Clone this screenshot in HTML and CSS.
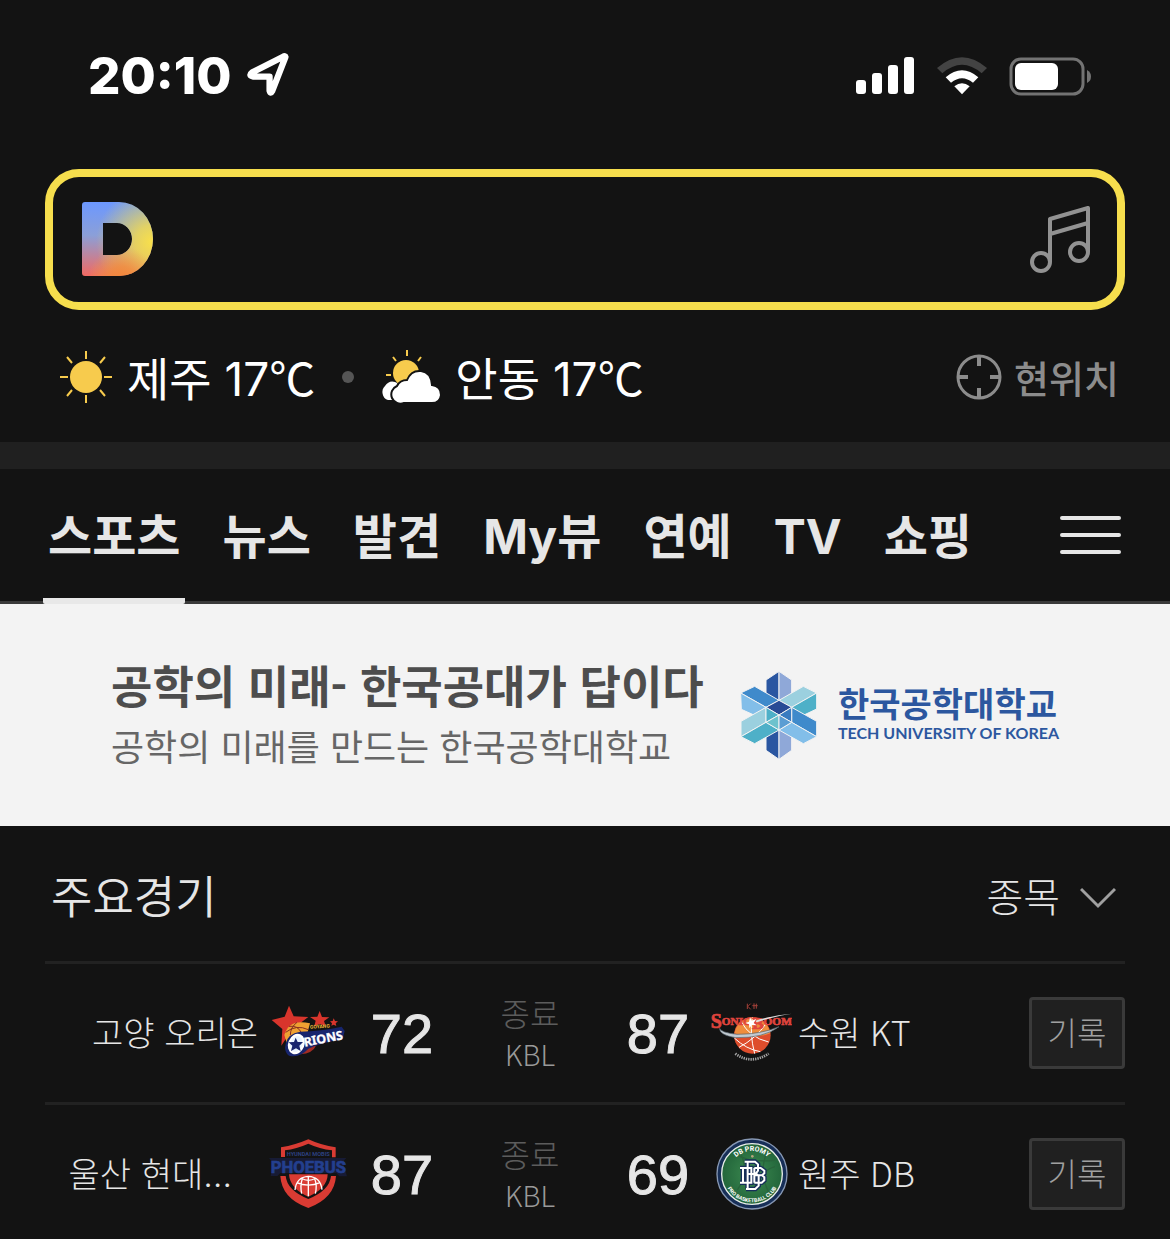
FILE: index.html
```html
<!DOCTYPE html>
<html lang="ko">
<head>
  <meta charset="UTF-8">
  <meta name="viewport" content="width=device-width, initial-scale=1.0">
  <title>Daum</title>
  <link rel="stylesheet" href="styles.css">
</head>
<body>
  <!-- Status bar -->
  <div class="status-bar">
    <div class="clock">
      <span>20:10</span>
      <svg class="location-icon" width="46" height="46" viewBox="0 0 44 44">
        <path d="M38.500 4.500 26 36.500Q24.500 39.500 23.500 36V22.500H7.500Q3 21.500 7 18.500L35.500 4Q39.500 2 38.500 4.500Z" fill="none" stroke="#fff" stroke-width="6" stroke-linejoin="round"/>
      </svg>
    </div>
    <div class="signals">
      <svg width="60" height="38" viewBox="0 0 60 38" fill="#fff">
        <rect x="1" y="23" width="10" height="14" rx="3"/>
        <rect x="17" y="16" width="10" height="21" rx="3"/>
        <rect x="33" y="8" width="10" height="29" rx="3"/>
        <rect x="49" y="0" width="10" height="37" rx="3"/>
      </svg>
      <svg width="50" height="38" viewBox="0 0 150 114">
        <path d="M0 33Q75 -32 150 33L134 49Q75 -2 16 49Z" fill="#434343"/>
        <path d="M26 61Q75 19 124 61L108 77Q75 50 42 77Z" fill="#fff"/>
        <path d="M52 88Q75 70 98 88L75 112Z" fill="#fff"/>
      </svg>
      <svg width="82" height="39" viewBox="0 0 82 39">
        <rect x="2" y="2" width="72" height="35" rx="10" fill="none" stroke="#737373" stroke-width="3"/>
        <rect x="6" y="6" width="43" height="27" rx="6" fill="#fff"/>
        <path d="M78 13Q82 15 82 19.500T78 26Z" fill="#737373"/>
      </svg>
    </div>
  </div>

  <!-- Search box -->
  <form class="search">
    <svg class="logo" width="72" height="74" viewBox="0 0 72 74" role="img" aria-label="Daum">
      <defs>
        <linearGradient id="d-base" x1="0" y1="0" x2="0" y2="1">
          <stop offset="0" stop-color="#6c98ff"/>
          <stop offset=".45" stop-color="#8b9fd8"/>
          <stop offset="1" stop-color="#f16a62"/>
        </linearGradient>
        <radialGradient id="d-yellow" gradientUnits="userSpaceOnUse" cx="70" cy="40" r="56">
          <stop offset="0" stop-color="#f9e04a"/>
          <stop offset=".3" stop-color="#f2db50" stop-opacity=".85"/>
          <stop offset="1" stop-color="#e8d85c" stop-opacity="0"/>
        </radialGradient>
        <radialGradient id="d-orange" gradientUnits="userSpaceOnUse" cx="40" cy="78" r="34">
          <stop offset="0" stop-color="#f1853a"/>
          <stop offset=".4" stop-color="#f28c3b" stop-opacity=".75"/>
          <stop offset="1" stop-color="#f3a040" stop-opacity="0"/>
        </radialGradient>
        <path id="d-shape" fill-rule="evenodd" d="M3 0H37A34 37 0 0 1 37 74H3Q0 74 0 71V3Q0 0 3 0ZM21 21V53H35A15 16 0 0 0 35 21Z"/>
      </defs>
      <use href="#d-shape" fill="url(#d-base)"/>
      <use href="#d-shape" fill="url(#d-yellow)"/>
      <use href="#d-shape" fill="url(#d-orange)"/>
    </svg>
    <input class="search-input" type="search" aria-label="검색어 입력">
    <button class="icon-button" type="button" aria-label="음악 검색">
      <svg width="60" height="68" viewBox="0 0 60 68" fill="none" stroke="#929292" stroke-width="4" stroke-linejoin="round">
        <circle cx="11" cy="57" r="9"/>
        <circle cx="49" cy="47" r="9"/>
        <path d="M20 57V14L58 3V47M20 29 58 18"/>
      </svg>
    </button>
  </form>

  <!-- Weather -->
  <div class="weather">
    <a class="weather-item" href="#">
      <svg width="54" height="54" viewBox="0 0 54 54" fill="#f7cb4d">
        <circle cx="27" cy="27" r="16"/>
        <path d="M27 1V9M27 45V53M1 27H9M45 27H53M8 7 13 13M46 7 41 13M8 46 13 40M46 46 41 40" stroke="#f7cb4d" stroke-width="2"/>
      </svg>
      <span class="label">제주 17<span class="unit">℃</span></span>
    </a>
    <span class="dot"></span>
    <a class="weather-item" href="#">
      <svg width="60" height="54" viewBox="0 0 60 54">
        <path d="M26 0V6M12 7 15 11M40 7 37 11M5 25H10M42 25H47" stroke="#f7cb4d" stroke-width="2"/>
        <circle cx="25" cy="23" r="13" fill="#f7cb4d"/>
        <path d="M7 50A7 8 0 0 1 4 36Q8 30 14 32Q21 34 22 50Z" fill="#fff"/>
        <path d="M23 53A9 9 0 0 1 16 36Q19 30 26 30Q30 20 40 21Q50 22 51 35Q60 36 60 45Q59 53 51 53Z" fill="#fff" stroke="#131313" stroke-width="2"/>
      </svg>
      <span class="label">안동 17<span class="unit">℃</span></span>
    </a>
    <button class="here" type="button">
      <svg width="46" height="46" viewBox="0 0 46 46" fill="none" stroke="#8c8c8c" stroke-width="3">
        <circle cx="23" cy="23" r="21"/>
        <path d="M23 2V12M23 34V44M2 23H12M34 23H44" stroke-width="4"/>
      </svg>
      <span class="label">현위치</span>
    </button>
  </div>

  <!-- Tabs -->
  <nav class="tabs">
    <a class="tab active" href="#">스포츠</a>
    <a class="tab" href="#">뉴스</a>
    <a class="tab" href="#">발견</a>
    <a class="tab" href="#">My뷰</a>
    <a class="tab" href="#">연예</a>
    <a class="tab" href="#">TV</a>
    <a class="tab" href="#">쇼핑</a>
    <button class="icon-button menu" type="button" aria-label="전체 메뉴">
      <svg width="62" height="42" viewBox="0 0 62 42" stroke="#e6e6e6" stroke-width="4" stroke-linecap="round">
        <path d="M2 4H59M2 21H59M2 38H59"/>
      </svg>
    </button>
  </nav>

  <!-- Banner -->
  <a class="banner" href="#">
    <span class="banner-copy">
      <strong class="banner-title">공학의 미래- 한국공대가 답이다</strong>
      <span class="banner-text">공학의 미래를 만드는 한국공학대학교</span>
    </span>
    <svg class="banner-mark" width="78" height="88" viewBox="64 60 232 264" stroke="#f3f3f3" stroke-width="3" stroke-linejoin="round">
      <path d="M180 61 141 87V167L180 148Z" fill="#2a56a1"/>
      <path d="M180 61 218 87V167L180 148Z" fill="#8fa8d8"/>
      <path d="M180 325 141 298V217L180 237Z" fill="#2a56a1"/>
      <path d="M180 325 218 298V217L180 237Z" fill="#8fa8d8"/>
      <path d="M65 126 107 106 180 148 141 169Z" fill="#3f8acb"/>
      <path d="M65 126 141 169 107 193 67 175Z" fill="#82bee9"/>
      <path d="M293 126 253 106 180 148 218 169Z" fill="#9bd0df"/>
      <path d="M293 126 218 169 253 193 293 174Z" fill="#4eb0c8"/>
      <path d="M141 169V214L66 257V211Z" fill="#9bd0df"/>
      <path d="M141 214 180 237 107 278 66 257Z" fill="#4eb0c8"/>
      <path d="M218 169V214L293 257V211Z" fill="#3f8acb"/>
      <path d="M218 214 180 237 253 278 293 257Z" fill="#82bee9"/>
      <path d="M180 148 218 169 180 192 141 169Z" fill="#294b95"/>
      <path d="M141 169 180 192 141 214Z" fill="#4eb0c8"/>
      <path d="M180 192V237L141 214Z" fill="#6dc2cd"/>
      <path d="M218 169V214L180 192Z" fill="#397bc0"/>
      <path d="M180 192 218 214 180 237Z" fill="#5b9dd3"/>
    </svg>
    <span class="banner-brand">
      <strong class="brand-ko">한국공학대학교</strong>
      <span class="brand-en">TECH UNIVERSITY OF KOREA</span>
    </span>
  </a>

  <!-- Games -->
  <section class="games">
    <div class="games-header">
      <h2>주요경기</h2>
      <button class="sport-button" type="button">
        <span>종목</span>
        <svg class="chevron" width="36" height="22" viewBox="0 0 36 22" fill="none" stroke="#a0a0a0" stroke-width="3">
          <path d="M1 2 18 19 35 2"/>
        </svg>
      </button>
    </div>

    <div class="game">
      <span class="team home">고양 오리온</span>
      <svg class="emblem" width="78" height="58" viewBox="28 45 234 174">
        <path d="M88 50 102 82 146 84 113 109 120 138 91 130 65 170 68 120 36 93 75 83Z" fill="#d8352c"/>
        <path d="M180 66 187 84 209 85 193 96 198 111 181 105 164 111 168 95 151 84 173 83Z" fill="#d8352c"/>
        <path d="M222 88 226 96 235 97 228 103 230 111 222 107 215 110 217 103 211 97 219 96Z" fill="#d8352c"/>
        <path d="M74 138Q88 88 151 103L141 140 81 162Z" fill="#eea132"/>
        <path d="M78 130Q110 105 146 122M88 112Q115 108 126 133M112 100Q92 115 92 138" fill="none" stroke="#872f22" stroke-width="3"/>
        <path d="M122 196Q160 192 169 170L138 174Z" fill="#a22c24"/>
        <path d="M78 164Q84 134 121 128 185 127 246 113L255 126 249 151Q190 160 146 179 120 208 88 200 72 188 78 164Z" fill="#17256e"/>
        <ellipse cx="110" cy="165" rx="21" ry="28" fill="#e8f4ff" stroke="#fff" stroke-width="7" transform="rotate(22 110 165)"/>
        <path d="M108 146 114 159 130 159 119 170 123 186 109 178 94 186 98 170 87 160 103 159Z" fill="#17256e"/>
        <text class="orions-text" x="135" y="173" transform="rotate(-11 135 173)">RIONS</text>
        <text class="orions-small" x="151" y="119" transform="rotate(-3 151 119)">GOYANG</text>
      </svg>
      <strong class="score">72</strong>
      <span class="state"><span class="finished">종료</span><span>KBL</span></span>
      <strong class="score">87</strong>
      <svg class="emblem" width="84" height="62" viewBox="25 38 252 186">
        <circle cx="158" cy="138" r="55" fill="#de4d2c"/>
        <path d="M104 132Q115 88 158 86 203 90 212 132 157 153 104 132Z" fill="#ef8d3c"/>
        <path d="M158 84Q149 132 165 193M124 96Q150 145 207 158M200 102Q168 148 118 174M104 146Q140 180 182 187" fill="none" stroke="#fff" stroke-width="3"/>
        <path d="M60 117Q58 137 108 145 192 147 238 112 184 135 112 135 64 130 60 117Z" fill="#c2cad1" stroke="#536069" stroke-width="2"/>
        <text class="sonic-text" x="33" y="116">S<tspan class="sonic-mid" dy="-9">ONIC</tspan></text>
        <text class="sonic-text sonic-boom" x="157" y="118">B<tspan class="sonic-mid" dy="-10">OOM</tspan></text>
        <path d="M151 83 156 94 170 89 162 101 171 108 157 107 149 116 148 105 137 101 148 97Z" fill="#fff"/>
        <path d="M168 94Q223 77 280 73 225 81 170 99Z" fill="#ddd"/>
        <path d="M143 43V59M153 43 145 51 153 60M163 42V59M158 49H174M170 43V58" stroke="#a34139" stroke-width="3"/>
        <path d="M107 193Q154 227 207 193" fill="none" stroke="#a5a5a5" stroke-width="8" stroke-dasharray="4 3"/>
      </svg>
      <span class="team">수원 KT</span>
      <button class="record" type="button">기록</button>
    </div>

    <div class="game">
      <span class="team home clipped">울산 현대…</span>
      <svg class="emblem" width="80" height="70" viewBox="25 27 240 210">
        <path d="M64 81V52Q107 45 146 28 185 46 228 52V82H217V61Q180 57 146 41 110 57 76 61V81Z" fill="#d93b33"/>
        <path d="M62 138H78Q82 181 146 207 210 181 214 138H229Q225 204 146 234 66 206 62 138Z" fill="#d93b33"/>
        <path d="M88 133H204Q203 175 146 200 91 177 88 133Z" fill="#d93b33"/>
        <path d="M106 180Q110 141 146 139 183 141 187 179M146 139V199M111 158Q146 173 181 158M124 144Q146 158 169 144M128 146Q121 165 126 191M165 146Q173 165 167 191" fill="none" stroke="#fff" stroke-width="4"/>
        <text class="phoebus-small" x="146" y="77" text-anchor="middle">HYUNDAI MOBIS</text>
        <path d="M28 84H260L249 96 262 139H239L230 129H62L53 138H33L40 99Z" fill="#171b35"/>
        <text class="phoebus-text" x="146" y="129" text-anchor="middle">PHOEBUS</text>
      </svg>
      <strong class="score">87</strong>
      <span class="state"><span class="finished">종료</span><span>KBL</span></span>
      <strong class="score">69</strong>
      <svg class="emblem" width="76" height="72" viewBox="-12 0 228 216">
        <defs>
          <radialGradient id="promy-green">
            <stop offset="0" stop-color="#3c8a50"/>
            <stop offset="1" stop-color="#23663b"/>
          </radialGradient>
          <path id="promy-top" d="M39 108A69 69 0 0 1 177 108"/>
          <path id="promy-bottom" d="M23 108A85 85 0 0 0 193 108"/>
        </defs>
        <circle cx="108" cy="108" r="105" fill="#172f58" stroke="#8798b4" stroke-width="4"/>
        <circle cx="108" cy="108" r="91" fill="url(#promy-green)" stroke="#e8eee9" stroke-width="4"/>
        <path d="M58 48Q100 75 176 67M154 40Q126 104 160 166M177 86Q135 96 112 160M73 45Q102 102 64 156" fill="none" stroke="#28643b" stroke-width="4"/>
        <text class="promy-text"><textPath href="#promy-top" startOffset="50%" text-anchor="middle">DB PROMY</textPath></text>
        <text class="promy-text promy-club"><textPath href="#promy-bottom" startOffset="50%" text-anchor="middle">PRO BASKETBALL CLUB</textPath></text>
        <circle cx="109" cy="55" r="4" fill="#b7a47c"/>
        <g fill="none" stroke-linejoin="miter">
          <path d="M86 71H117L126 79V98L120 106 128 114V143L118 153H90M95 71V153M95 108H119M72 90H106V134H72M81 90V134M115 90H134L145 98V106L138 112 145 118V127L137 134H115M115 90V134M115 112H138" stroke="#162e59" stroke-width="14"/>
          <path d="M86 71H117L126 79V98L120 106 128 114V143L118 153H90M95 71V153M95 108H119M72 90H106V134H72M81 90V134M115 90H134L145 98V106L138 112 145 118V127L137 134H115M115 90V134M115 112H138" stroke="#fff" stroke-width="6"/>
        </g>
      </svg>
      <span class="team">원주 DB</span>
      <button class="record" type="button">기록</button>
    </div>
  </section>
</body>
</html>
```

FILE: styles.css
```css
* {
  box-sizing: border-box;
}

body {
  margin: 0;
  background: #131313;
  color: #e6e6e6;
  font-family: Inter, 'Noto Sans CJK KR', sans-serif;
}

a {
  color: inherit;
  text-decoration: none;
}

button {
  padding: 0;
  border: none;
  background: none;
  color: inherit;
  font: inherit;
  cursor: pointer;
}

svg {
  display: block;
  flex-shrink: 0;
}

/* Status bar */
.status-bar {
  display: flex;
  justify-content: space-between;
  align-items: center;
  padding: 46px 79px 0 88px;
  height: 106px;
  color: #fff;
}

.clock {
  display: flex;
  align-items: center;
  gap: 13px;
  font-size: 51px;
  font-weight: 800;
  line-height: 60px;
}

.signals {
  display: flex;
  align-items: center;
  gap: 22px;
}

/* Search */
.search {
  display: flex;
  align-items: center;
  gap: 24px;
  height: 141px;
  margin: 63px 45px 0;
  padding: 0 27px 2px 29px;
  border: 8px solid #f6de4d;
  border-radius: 34px;
}

.search-input {
  flex: 1;
  min-width: 0;
  height: 100px;
  border: none;
  outline: none;
  background: none;
  color: #fff;
  font-size: 44px;
}

/* Weather */
.weather {
  display: flex;
  align-items: center;
  height: 132px;
  padding: 2px 51px 0 59px;
  color: #fff;
  font-size: 46px;
  line-height: 60px;
}

.weather-item {
  display: flex;
  align-items: center;
  gap: 14px;
}

.label {
  padding-top: 4px;
}

.unit {
  font-family: 'Noto Sans CJK KR', sans-serif;
  line-height: 0;
}

.dot {
  width: 12px;
  height: 12px;
  margin: 0 27px;
  border-radius: 50%;
  background: #555;
}

.here {
  display: flex;
  align-items: center;
  gap: 12px;
  margin-left: auto;
  color: #8c8c8c;
  font-size: 38px;
  font-weight: 500;
}

/* Tabs */
.tabs {
  display: flex;
  align-items: stretch;
  gap: 32px;
  padding: 0 48px 0 43px;
  border-top: 27px solid #202020;
  border-bottom: 3px solid #3a3a3a;
  font-size: 48px;
  font-weight: 700;
  line-height: 128px;
}

.tab {
  padding: 4px 5px 0;
  white-space: nowrap;
}

.tab.active {
  margin-bottom: -3px;
  border-radius: 2px;
  background: linear-gradient(#e8e8e8, #e8e8e8) bottom / 100% 6px no-repeat;
}

.menu {
  margin-left: auto;
}

/* Banner */
.banner {
  display: flex;
  align-items: center;
  height: 222px;
  padding: 0 111px;
  background: #f3f3f3;
  font-family: 'Noto Sans CJK KR', sans-serif;
  white-space: nowrap;
}

.banner-copy,
.banner-brand {
  display: flex;
  flex-direction: column;
}

.banner-title {
  color: #4d4d4d;
  font-size: 45px;
  line-height: 60px;
}

.banner-text {
  color: #666;
  font-size: 36px;
  line-height: 60px;
}

.banner-mark {
  margin-left: auto;
}

.banner-brand {
  margin-left: 20px;
  color: #2c579f;
}

.brand-ko {
  font-size: 34px;
  line-height: 36px;
}

.brand-en {
  font-family: Lato, sans-serif;
  font-size: 16px;
  font-weight: 700;
  line-height: 24px;
}

/* Games */
.games {
  padding: 0 45px;
  font-family: 'Noto Sans CJK KR', sans-serif;
  font-weight: 300;
}

.games-header {
  display: flex;
  justify-content: space-between;
  align-items: center;
  height: 135px;
  padding: 2px 9px 0 6px;
}

.games-header h2 {
  margin: 0;
  font-size: 45px;
  font-weight: 350;
}

.sport-button {
  display: flex;
  align-items: center;
  gap: 20px;
  font-size: 40px;
}

.chevron {
  margin-top: 6px;
}

.game {
  display: grid;
  grid-template-columns: 213fr 100fr 88fr 168fr 88fr 96fr 231fr 96fr;
  align-items: center;
  height: 141px;
  border-top: 3px solid #222;
}

.team {
  padding-bottom: 2px;
  font-size: 34px;
  line-height: 48px;
  white-space: nowrap;
}

.home {
  text-align: right;
}

.clipped {
  padding: 2px 26px 0 0;
  font-family: Inter, 'Noto Sans CJK KR', sans-serif;
}

.emblem {
  justify-self: center;
}

.score {
  font-family: 'Liberation Sans', sans-serif;
  font-size: 56px;
  font-weight: 400;
  text-align: center;
  -webkit-text-stroke: 1px #e6e6e6;
}

.state {
  display: flex;
  flex-direction: column;
  align-items: center;
  color: #999;
  font-size: 28px;
  line-height: 42px;
}

.finished {
  color: #5c5c5c;
  font-size: 32px;
}

.record {
  height: 72px;
  padding-bottom: 4px;
  border: 3px solid #3a3a3a;
  border-radius: 4px;
  background: #202020;
  color: #a0a0a0;
  font-size: 32px;
}

/* Emblem lettering */
.orions-text {
  fill: #fff;
  stroke: #fff;
  stroke-width: 1px;
  font: 700 37px 'Noto Sans', sans-serif;
}

.orions-small {
  fill: #edb83a;
  font: 700 15px Roboto, sans-serif;
}

.sonic-text {
  fill: #e0443d;
  stroke: #e0443d;
  stroke-width: 2px;
  font: 700 60px 'Liberation Serif', serif;
}

.sonic-boom {
  font-size: 52px;
}

.sonic-mid {
  font-size: 34px;
}

.phoebus-small {
  fill: #2c407f;
  font: 700 17px Roboto, sans-serif;
}

.phoebus-text {
  fill: #233f8e;
  stroke: #233f8e;
  stroke-width: 2px;
  font: 700 50px Roboto, sans-serif;
}

.promy-text {
  fill: #fff;
  font: 700 21px Roboto, sans-serif;
}

.promy-club {
  font-size: 16px;
}
```
